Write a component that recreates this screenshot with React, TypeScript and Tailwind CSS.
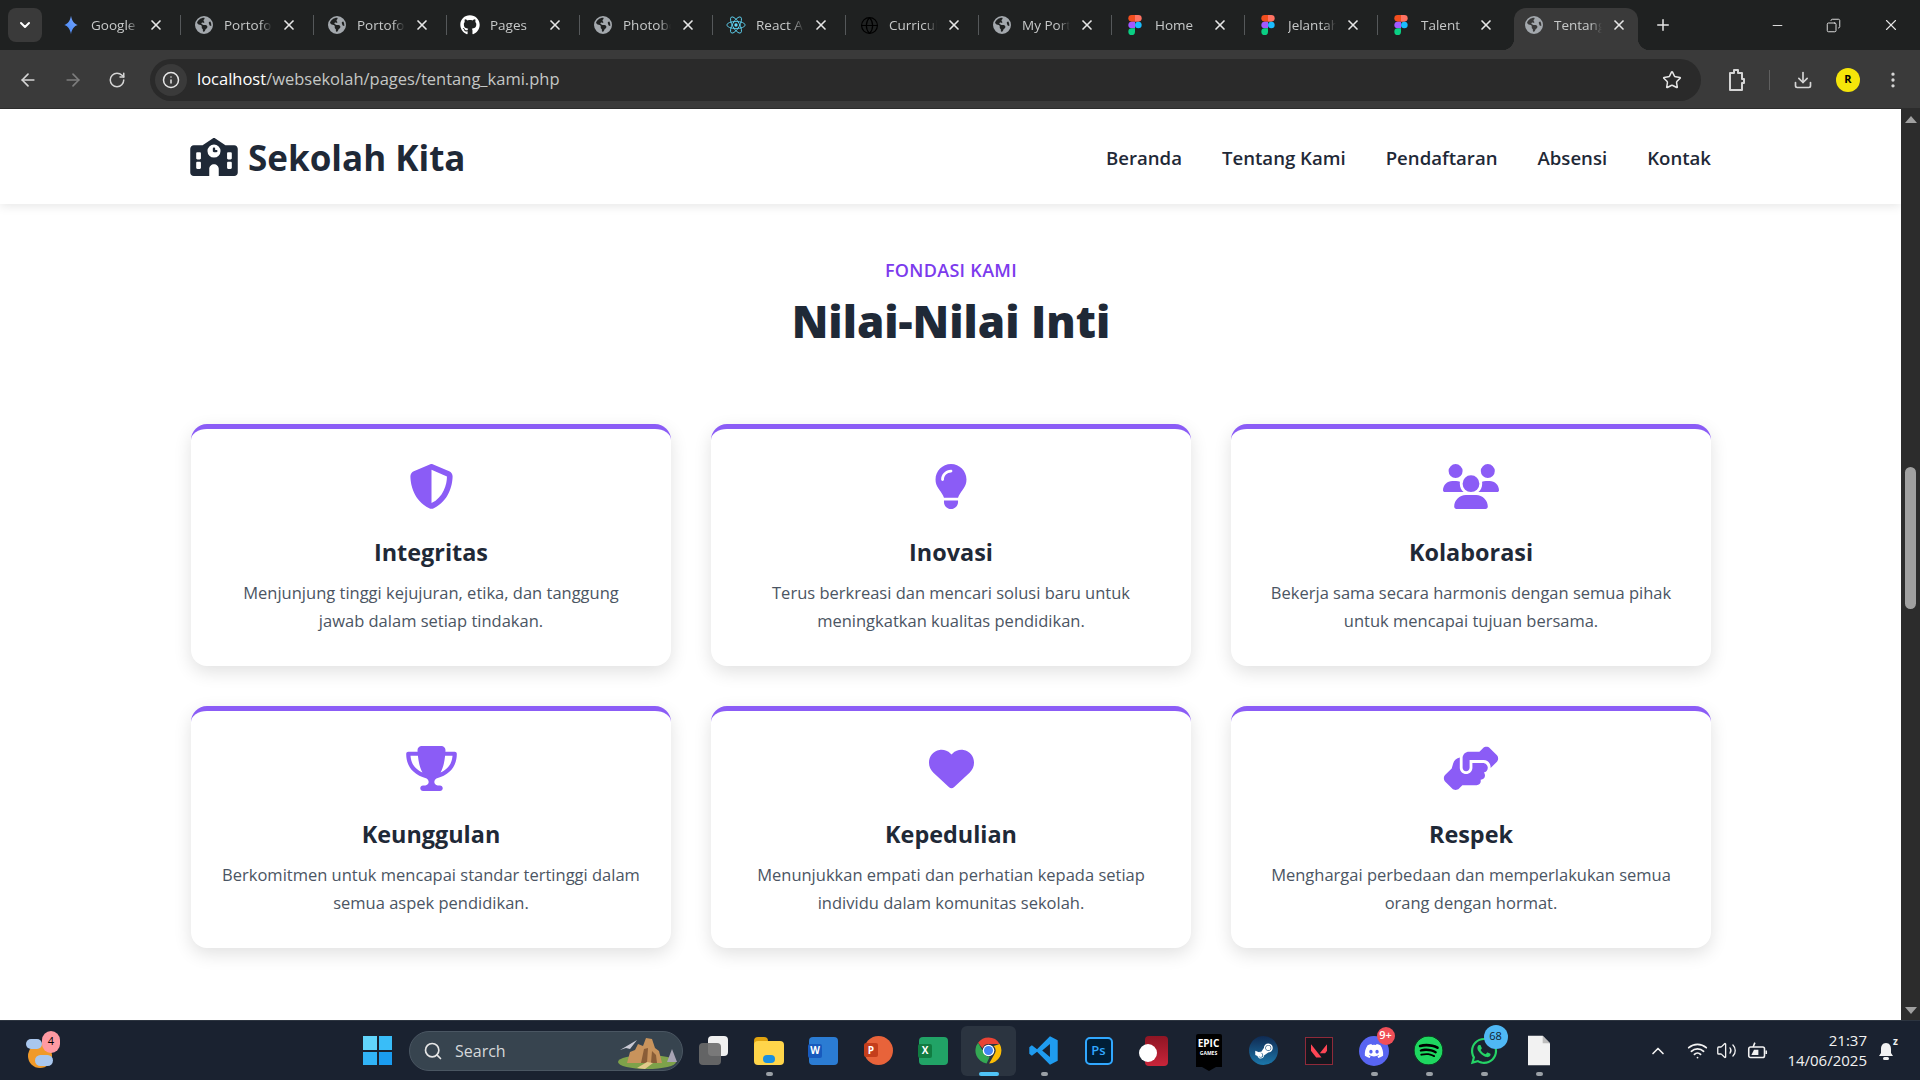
import React from "react";
import { ArrowLeft, ArrowRight, RotateCw, Info, Star, Download, MoreVertical, X, Plus, Minus, Copy, Search, ChevronUp, ChevronDown, Wifi, Volume2, Globe } from "lucide-react";
import { FaGithub, FaSchool, FaShieldHalved, FaLightbulb, FaUsers, FaTrophy, FaHeart, FaHandshakeAngle, FaDiscord, FaSteamSymbol, FaSpotify, FaWhatsapp, FaEarthAmericas } from "react-icons/fa6";
import { SiValorant } from "react-icons/si";

const Gemini = () => (
  <svg viewBox="0 0 24 24" className="w-5 h-5">
    <defs>
      <linearGradient id="gem" x1="0" y1="1" x2="1" y2="0">
        <stop offset="0" stopColor="#4285f4" />
        <stop offset="1" stopColor="#7aa7ff" />
      </linearGradient>
    </defs>
    <path d="M12 1c1 6 4 10 8 11-4 1-7 5-8 11-1-6-4-10-8-11 4-1 7-5 8-11z" fill="url(#gem)" />
  </svg>
);

const Figma = () => (
  <svg viewBox="0 0 12 18" className="w-[14px] h-[20px]">
    <path d="M3 0h3v6H3a3 3 0 010-6z" fill="#f24e1e" />
    <path d="M6 0h3a3 3 0 010 6H6z" fill="#ff7262" />
    <path d="M3 6h3v6H3a3 3 0 010-6z" fill="#a259ff" />
    <circle cx="9" cy="9" r="3" fill="#1abcfe" />
    <path d="M3 12h3v3a3 3 0 11-3-3z" fill="#0acf83" />
  </svg>
);

const ReactAtom = () => (
  <svg viewBox="-12 -12 24 24" className="w-5 h-5" fill="none" stroke="#61dafb" strokeWidth="1">
    <circle r="2" fill="#61dafb" stroke="none" />
    <ellipse rx="11" ry="4.2" />
    <ellipse rx="11" ry="4.2" transform="rotate(60)" />
    <ellipse rx="11" ry="4.2" transform="rotate(120)" />
  </svg>
);

const GlobeFav = () => <FaEarthAmericas className="w-[18px] h-[18px] text-[#a3a8ad]" />;

const tabs = [
  { title: "Google Gemini", icon: <Gemini /> },
  { title: "Portofolio", icon: <GlobeFav /> },
  { title: "Portofolio", icon: <GlobeFav /> },
  { title: "Pages", icon: <FaGithub className="w-5 h-5 text-white" /> },
  { title: "Photobook", icon: <GlobeFav /> },
  { title: "React App", icon: <ReactAtom /> },
  { title: "Curriculum", icon: <Globe className="w-[19px] h-[19px] text-black" strokeWidth={1.5} /> },
  { title: "My Portfolio", icon: <GlobeFav /> },
  { title: "Home", icon: <Figma /> },
  { title: "Jelantah", icon: <Figma /> },
  { title: "Talent", icon: <Figma /> },
  { title: "Tentang", icon: <GlobeFav />, active: true },
];

function TabStrip() {
  return (
    <div className="h-[50px] bg-[#1f2121] flex items-start shrink-0">
      <div className="ml-2 mt-2 w-[34px] h-[34px] rounded-lg bg-[#3a3a3a] flex items-center justify-center">
        <ChevronDown className="w-4 h-4 text-white" strokeWidth={3} />
      </div>
      <div className="ml-[5px] flex h-full">
        {tabs.map((t, i) => (
          <div key={i} className="relative w-[133px] h-full flex items-center">
            {t.active && (
              <div className="absolute left-[4px] right-[5px] top-2 bottom-0 rounded-t-xl bg-[#3a3a3a]">
                <div className="absolute -left-3 bottom-0 w-3 h-3 bg-[radial-gradient(circle_at_0_0,transparent_12px,#3a3a3a_12.5px)]" />
                <div className="absolute -right-3 bottom-0 w-3 h-3 bg-[radial-gradient(circle_at_100%_0,transparent_12px,#3a3a3a_12.5px)]" />
              </div>
            )}
            <div className="relative w-full flex items-center">
              <div className="ml-[14px] w-5 h-5 flex items-center justify-center shrink-0">{t.icon}</div>
              <div className="ml-[10px] w-[48px] overflow-hidden whitespace-nowrap text-[13.5px] text-[#c7c9c9] [mask-image:linear-gradient(to_right,black_75%,transparent)]">
                {t.title}
              </div>
              <X className="ml-[9px] w-4 h-4 text-[#e6e6e6] shrink-0" strokeWidth={2.5} />
            </div>
            {!t.active && i !== 10 && <div className="absolute -right-px top-[15px] h-5 w-px bg-[#55585a]" />}
          </div>
        ))}
      </div>
      <div className="mt-[16px] ml-[11px] flex items-center">
        <Plus className="w-[18px] h-[18px] text-[#e6e6e6]" />
      </div>
      <div className="ml-auto mt-[16px] flex items-center text-[#e6e6e6]">
        <Minus className="w-[15px] h-[15px]" strokeWidth={1.5} />
        <Copy className="ml-[41px] w-[15px] h-[15px] -scale-x-100" strokeWidth={1.5} />
        <X className="ml-[41px] mr-[20px] w-[18px] h-[18px]" strokeWidth={1.5} />
      </div>
    </div>
  );
}

function Toolbar() {
  return (
    <div className="h-[59px] bg-[#3a3a3a] flex items-center shrink-0 border-b border-[#2c2c2c] pt-px">
      <ArrowLeft className="ml-[18px] w-5 h-5 text-[#d5d5d5]" />
      <ArrowRight className="ml-[25px] w-5 h-5 text-[#7d7d7d]" />
      <RotateCw className="ml-[25px] w-[18px] h-[18px] text-[#d5d5d5]" />
      <div className="ml-[24px] w-[1551px] h-[42px] rounded-full bg-[#2a2a2a] flex items-center">
        <div className="ml-[5px] w-8 h-8 rounded-full bg-[#3a3a3a] flex items-center justify-center">
          <Info className="w-[18px] h-[18px] text-[#e6e6e6]" />
        </div>
        <div className="ml-[10px] text-[16.5px] text-[#c4c7c5]">
          <span className="text-white">localhost</span>/websekolah/pages/tentang_kami.php
        </div>
        <Star className="ml-auto mr-[19px] w-5 h-5 text-[#e6e6e6]" strokeWidth={1.8} />
      </div>
      <svg viewBox="0 0 20 24" className="ml-[25px] w-5 h-6" fill="none" stroke="#d5d5d5" strokeWidth="2" strokeLinejoin="round">
        <path d="M4 5h4V2h4v3h4v6h2v4h-2v7H4z" />
      </svg>
      <div className="ml-[23px] w-px h-5 bg-[#5f5f5f]" />
      <Download className="ml-[23px] w-5 h-5 text-[#d5d5d5]" />
      <div className="ml-[23px] w-6 h-6 rounded-full bg-[#f5e50a] flex items-center justify-center text-[11px] font-bold text-black">R</div>
      <MoreVertical className="ml-[23px] w-5 h-5 text-[#d5d5d5]" />
    </div>
  );
}

const values = [
  { title: "Integritas", text: "Menjunjung tinggi kejujuran, etika, dan tanggung jawab dalam setiap tindakan.", icon: FaShieldHalved, w: "w-[45px]" },
  { title: "Inovasi", text: "Terus berkreasi dan mencari solusi baru untuk meningkatkan kualitas pendidikan.", icon: FaLightbulb, w: "w-[34px]" },
  { title: "Kolaborasi", text: "Bekerja sama secara harmonis dengan semua pihak untuk mencapai tujuan bersama.", icon: FaUsers, w: "w-[56px]" },
  { title: "Keunggulan", text: "Berkomitmen untuk mencapai standar tertinggi dalam semua aspek pendidikan.", icon: FaTrophy, w: "w-[51px]" },
  { title: "Kepedulian", text: "Menunjukkan empati dan perhatian kepada setiap individu dalam komunitas sekolah.", icon: FaHeart, w: "w-[45px]" },
  { title: "Respek", text: "Menghargai perbedaan dan memperlakukan semua orang dengan hormat.", icon: FaHandshakeAngle, w: "w-[56px]" },
];

function Page() {
  return (
    <div className="flex-1 bg-white overflow-hidden font-['Open_Sans',sans-serif]">
      <header className="h-[95px] bg-white shadow-[0_2px_10px_rgba(0,0,0,0.1)] relative">
        <div className="w-[1521px] ml-[190px] h-full flex items-center justify-between">
          <div className="flex items-center gap-[10px] text-[#1f2937]">
            <FaSchool className="w-12 h-[38px]" />
            <span className="pt-[4px] text-[35px] font-bold">Sekolah Kita</span>
          </div>
          <nav className="pt-[2px] flex gap-10 text-[18.6px] font-semibold text-[#1f2937]">
            <span>Beranda</span>
            <span>Tentang Kami</span>
            <span>Pendaftaran</span>
            <span>Absensi</span>
            <span>Kontak</span>
          </nav>
        </div>
      </header>
      <section className="w-[1520px] ml-[191px] pt-[53px]">
        <div className="text-center text-[18px] leading-[26px] tracking-[0.3px] font-semibold text-[#7c3aed]">FONDASI KAMI</div>
        <h2 className="mt-[7px] text-center text-[44px] leading-[62px] font-extrabold text-[#1f2937]">Nilai-Nilai Inti</h2>
        <div className="mt-[72px] grid grid-cols-3 gap-10">
          {values.map((v) => (
            <div key={v.title} className="h-[242px] rounded-2xl border-t-[5px] border-[#8b5cf6] bg-white shadow-[0_6px_18px_rgba(0,0,0,0.12)] px-7 pt-[35px] text-center">
              <v.icon className={`mx-auto h-[45px] ${v.w} text-[#8b5cf6]`} />
              <h3 className="mt-[25px] text-[23.4px] leading-[36px] font-bold text-[#1f2937]">{v.title}</h3>
              <p className="mt-[9px] text-[16.5px] leading-[28px] text-[#4b5563]">{v.text}</p>
            </div>
          ))}
        </div>
      </section>
    </div>
  );
}

function Scrollbar() {
  return (
    <div className="w-[19px] bg-[#2c2c2c] flex flex-col items-center shrink-0 pt-[7px] pb-[6px]">
      <div className="w-0 h-0 border-x-[6px] border-x-transparent border-b-[7px] border-b-[#a0a0a0]" />
      <div className="mt-[344px] w-[11px] h-[142px] rounded-full bg-[#a0a0a0]" />
      <div className="mt-auto w-0 h-0 border-x-[6px] border-x-transparent border-t-[7px] border-t-[#a0a0a0]" />
    </div>
  );
}

const Slot = ({ children, dot, active }: { children: React.ReactNode; dot?: boolean; active?: boolean }) => (
  <div className={`relative w-[55px] h-[50px] flex items-center justify-center rounded-md ${active ? "bg-[#2b3440]" : ""}`}>
    {children}
    {dot && <div className="absolute bottom-0 left-1/2 -ml-[3px] w-[7px] h-1 rounded-full bg-[#9aa0a6]" />}
    {active && <div className="absolute bottom-0 left-1/2 -ml-[10px] w-5 h-1 rounded-full bg-[#4fc3f7]" />}
  </div>
);

const Badge = ({ children, className }: { children: React.ReactNode; className: string }) => (
  <div className={`absolute flex items-center justify-center rounded-full text-[11px] ${className}`}>{children}</div>
);

const OfficeIcon = ({ bg, letter, letterBg }: { bg: string; letter: string; letterBg: string }) => (
  <div className={`relative w-[29px] h-[28px] rounded-sm ${bg}`}>
    <div className={`absolute -left-[1px] top-[7px] w-[14px] h-[14px] rounded-[2px] ${letterBg} flex items-center justify-center text-[10px] font-bold text-white`}>{letter}</div>
  </div>
);

function Taskbar() {
  return (
    <div className="h-[60px] bg-[#1a2230] border-t border-[#2d3540] flex items-center relative shrink-0 font-['Open_Sans',sans-serif]">
      <div className="relative ml-[26px] w-[34px] h-[40px]">
        <div className="absolute left-[2px] bottom-[3px] w-6 h-6 rounded-full bg-[#f09a2a]" />
        <div className="absolute left-[9px] bottom-[5px] w-[18px] h-[11px] rounded-full bg-[#a9c7ee]" />
        <div className="absolute left-0 top-[8px] w-[16px] h-[10px] rounded-full bg-[#a9c7ee]" />
        <Badge className="right-0 top-0 w-[18px] h-[22px] bg-[#ff9aa2] text-black">4</Badge>
      </div>
      <div className="ml-[303px] w-[29px] h-[29px] grid grid-cols-2 gap-[2px]">
        <div className="bg-[#62d5fb]" />
        <div className="bg-[#39bdf8]" />
        <div className="bg-[#31b4f7]" />
        <div className="bg-[#1a9cf0]" />
      </div>
      <div className="ml-[17px] w-[274px] h-10 rounded-full bg-[#37444f] border border-[#4a5662] flex items-center relative">
        <Search className="ml-[13px] w-5 h-5 text-[#e6e6e6]" />
        <span className="ml-[12px] text-[16px] text-[#d5d8da]">Search</span>
        <svg viewBox="0 0 60 32" className="absolute right-[5px] top-[5px] w-[60px] h-[32px]">
          <ellipse cx="30" cy="25" rx="29" ry="7" fill="#7ea24a" />
          <path d="M50 25l5-13 5 13z" fill="#a8a4b4" />
          <path d="M10 26l3-11 5-2 3-6 5 2 3-8 6 1 3 9 4 3 3 12z" fill="#c8935c" />
          <path d="M24 26l3-14 4-1-1 15zM34 26l1-12 4 4 1 8z" fill="#8a5d37" />
          <path d="M20 31l10-6 6 1-8 6z" fill="#e2c98b" />
          <path d="M3 13L20 3l-7 9-4-1z" fill="#c9c9d4" />
        </svg>
      </div>
      <div className="ml-[3px] flex items-center">
        <Slot>
          <div className="relative w-[29px] h-[29px]">
            <div className="absolute right-0 top-0 w-5 h-5 rounded-sm bg-[#f0f0f0]" />
            <div className="absolute left-0 bottom-0 w-[22px] h-[22px] rounded-sm bg-[#6b6b6b]/90" />
          </div>
        </Slot>
        <Slot dot>
          <div className="relative w-[30px] h-[28px]">
            <div className="absolute left-0 top-0 w-[14px] h-[8px] rounded-t-sm bg-[#e0a30f]" />
            <div className="absolute inset-x-0 bottom-0 h-[24px] rounded-sm bg-[#ffd54a]" />
            <div className="absolute left-[9px] bottom-[2px] w-[12px] h-[8px] rounded-sm bg-[#1a8fe0]" />
          </div>
        </Slot>
        <Slot><OfficeIcon bg="bg-[#2b7cd3]" letter="W" letterBg="bg-[#185abd]" /></Slot>
        <Slot>
          <div className="relative w-[29px] h-[29px] rounded-full bg-[#e8633a]">
            <div className="absolute left-0 top-[7px] w-[14px] h-[14px] rounded-[2px] bg-[#c43e1c] flex items-center justify-center text-[10px] font-bold text-white">P</div>
          </div>
        </Slot>
        <Slot><OfficeIcon bg="bg-[#21a366]" letter="X" letterBg="bg-[#107c41]" /></Slot>
        <Slot active>
          <svg viewBox="0 0 48 48" className="w-[31px] h-[31px]">
            <path d="M24 4a20 20 0 0117.3 10H24a10 10 0 00-9.4 6.6L7.9 12A20 20 0 0124 4z" fill="#ea4335" />
            <path d="M41.3 14A20 20 0 0125 44l8.6-15A10 10 0 0032 17z" fill="#fbbc05" />
            <path d="M7.9 12l8.6 15A10 10 0 0026 33.8L21 44A20 20 0 017.9 12z" fill="#34a853" />
            <circle cx="24" cy="24" r="9" fill="#fff" />
            <circle cx="24" cy="24" r="7" fill="#4285f4" />
          </svg>
        </Slot>
        <Slot dot>
          <svg viewBox="0 0 24 24" className="w-[31px] h-[31px]">
            <path d="M17 1l6 3v16l-6 3L7 13l-4 3-2-1.500V9.500L3 8l4 3z" fill="#1f9cf0" />
            <path d="M17 7l-6 5 6 5z" fill="#1a2230" />
          </svg>
        </Slot>
        <Slot>
          <div className="w-[28px] h-[28px] rounded-[5px] bg-[#001e36] border-2 border-[#31a8ff] flex items-center justify-center text-[13px] font-semibold text-[#31a8ff]">Ps</div>
        </Slot>
        <Slot>
          <div className="relative ml-[6px] w-[23px] h-[30px] rounded-sm bg-gradient-to-b from-[#8f1524] to-[#c9253a]">
            <div className="absolute -left-[6px] top-[8px] w-[18px] h-[18px] rounded-full bg-white" />
          </div>
        </Slot>
        <Slot>
          <div className="relative w-[26px] h-[33px] rounded-t-[2px] bg-black flex flex-col items-center pt-[3px] text-white">
            <span className="text-[10px] leading-[12px] font-bold">EPIC</span>
            <span className="text-[5px] leading-[8px] font-bold">GAMES</span>
            <div className="absolute top-full left-1/2 -ml-[7px] w-0 h-0 border-x-[7px] border-x-transparent border-t-[4px] border-t-black" />
          </div>
        </Slot>
        <Slot>
          <div className="w-[29px] h-[29px] rounded-full bg-gradient-to-b from-[#0f2a52] to-[#1b78ab] flex items-center justify-center">
            <FaSteamSymbol className="w-5 h-5 text-white" />
          </div>
        </Slot>
        <Slot>
          <div className="w-[28px] h-[28px] border border-[#8f2a3a] bg-[#14171f] flex items-center justify-center">
            <SiValorant className="w-4 h-4 text-[#ff4655]" />
          </div>
        </Slot>
        <Slot dot>
          <div className="relative w-[30px] h-[30px] rounded-full bg-[#5865f2] flex items-center justify-center">
            <FaDiscord className="w-5 h-5 text-white" />
            <Badge className="-right-[6px] -top-[9px] w-[18px] h-[18px] bg-[#f04f58] text-white font-semibold">9+</Badge>
          </div>
        </Slot>
        <Slot dot><div className="w-[29px] h-[29px] rounded-full bg-[#1ed760] flex items-center justify-center"><FaSpotify className="w-[29px] h-[29px] text-[#1ed760] bg-black rounded-full" /></div></Slot>
        <Slot dot>
          <div className="relative">
            <FaWhatsapp className="w-[30px] h-[30px] text-[#25d366]" />
            <Badge className="-right-[9px] -top-[11px] w-6 h-6 bg-[#4fb8f5] text-[#10202c]">68</Badge>
          </div>
        </Slot>
        <Slot dot>
          <svg viewBox="0 0 24 32" className="w-[22px] h-[31px]">
            <path d="M0 0h16l8 8v24H0z" fill="#f2f2f2" />
            <path d="M16 0l8 8h-8z" fill="#bdbdbd" />
          </svg>
        </Slot>
      </div>
      <div className="ml-auto flex items-center text-[#f2f2f2]">
        <ChevronUp className="w-5 h-5" />
        <Wifi className="ml-[19px] w-[21px] h-[21px]" />
        <Volume2 className="ml-[8px] w-[21px] h-[21px]" strokeWidth={1.5} />
        <svg viewBox="0 0 24 24" className="ml-[10px] w-[21px] h-[21px]" fill="none" stroke="currentColor" strokeWidth="1.8">
          <rect x="2" y="8" width="18" height="12" rx="2" />
          <path d="M22 12v4" />
          <path d="M5 17l3-6h5v6z" fill="currentColor" stroke="none" />
          <path d="M7 8l2-5" />
        </svg>
        <div className="ml-[19px] pb-[2px] flex flex-col items-end text-[15px] leading-[20px]">
          <span>21:37</span>
          <span>14/06/2025</span>
        </div>
        <div className="relative ml-[10px] mr-[25px] w-[18px] h-[24px]">
          <svg viewBox="0 0 18 24" className="w-[18px] h-[24px]" fill="currentColor">
            <path d="M9 4c-3.500 0-5 3-5 6v4l-2 3h14l-2-3v-4c0-3-1.500-6-5-6z" />
            <rect x="6" y="18" width="6" height="3" rx="1.500" />
          </svg>
          <span className="absolute -right-[3px] -top-[4px] text-[10px] leading-[12px] font-bold">z</span>
        </div>
      </div>
    </div>
  );
}

export default function App() {
  return (
    <div className="w-[1920px] h-[1080px] flex flex-col overflow-hidden font-['Open_Sans',sans-serif]">
      <TabStrip />
      <Toolbar />
      <div className="flex-1 flex min-h-0">
        <Page />
        <Scrollbar />
      </div>
      <Taskbar />
    </div>
  );
}
